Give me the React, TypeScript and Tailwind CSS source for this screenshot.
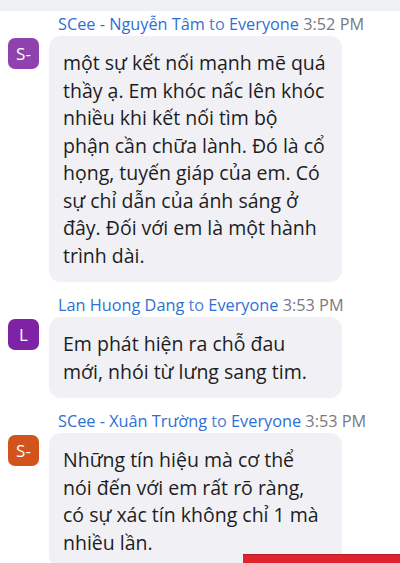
const messages = [
  {
    name: "SCee - Nguyễn Tâm",
    time: "3:52 PM",
    initials: "S-",
    color: "bg-[#8f42ae]",
    lines: [
      "một sự kết nối mạnh mẽ quá",
      "thầy ạ. Em khóc nấc lên khóc",
      "nhiều khi kết nối tìm bộ",
      "phận cần chữa lành. Đó là cổ",
      "họng, tuyến giáp của em. Có",
      "sự chỉ dẫn của ánh sáng ở",
      "đây. Đối với em là một hành",
      "trình dài.",
    ],
  },
  {
    name: "Lan Huong Dang",
    time: "3:53 PM",
    initials: "L",
    color: "bg-[#7e22a6]",
    lines: ["Em phát hiện ra chỗ đau", "mới, nhói từ lưng sang tim."],
  },
  {
    name: "SCee - Xuân Trường",
    time: "3:53 PM",
    initials: "S-",
    color: "bg-[#d2541c]",
    lines: [
      "Những tín hiệu mà cơ thể",
      "nói đến với em rất rõ ràng,",
      "có sự xác tín không chỉ 1 mà",
      "nhiều lần.",
    ],
  },
];

const App = () => {
  return (
    <div
      className="relative w-[400px] h-[563px] overflow-hidden bg-white"
      style={{ fontFamily: '"Open Sans", "Noto Sans", sans-serif' }}
    >
      <div className="w-full h-[11px] bg-[#eef0f2]"></div>
      <div className="flex flex-col gap-[13px] pt-[3px]">
        {messages.map((m, i) => (
          <div key={i} className="flex flex-col">
            <div className="pl-[58px] text-[16.3px] leading-[21px] whitespace-nowrap">
              <span className="text-[#2e6fd3]">{m.name}</span>
              <span className="text-[#4f7fcf]"> to </span>
              <span className="text-[#2e6fd3]">Everyone</span>
              <span className="text-[#777b80]"> {m.time}</span>
            </div>
            <div className="flex items-start mt-[1px]">
              <div
                className={`ml-[8px] mt-[2px] w-[31px] h-[31px] rounded-[7px] flex items-center justify-center text-white text-[17px] ${m.color}`}
              >
                {m.initials}
              </div>
              <div className="ml-[10px] w-[293px] rounded-[12px] bg-[#f1f1f5] px-[14px] py-[13px] text-[19.5px] leading-[27.5px] text-[#1d1d1f]">
                {m.lines.map((l, j) => (
                  <div key={j} className="whitespace-nowrap">
                    {l}
                  </div>
                ))}
              </div>
            </div>
          </div>
        ))}
      </div>
      <div className="absolute left-[243px] bottom-0 w-[157px] h-[9px] bg-[#df2430] border-t border-[#b81c26]"></div>
    </div>
  );
};

export default App;
